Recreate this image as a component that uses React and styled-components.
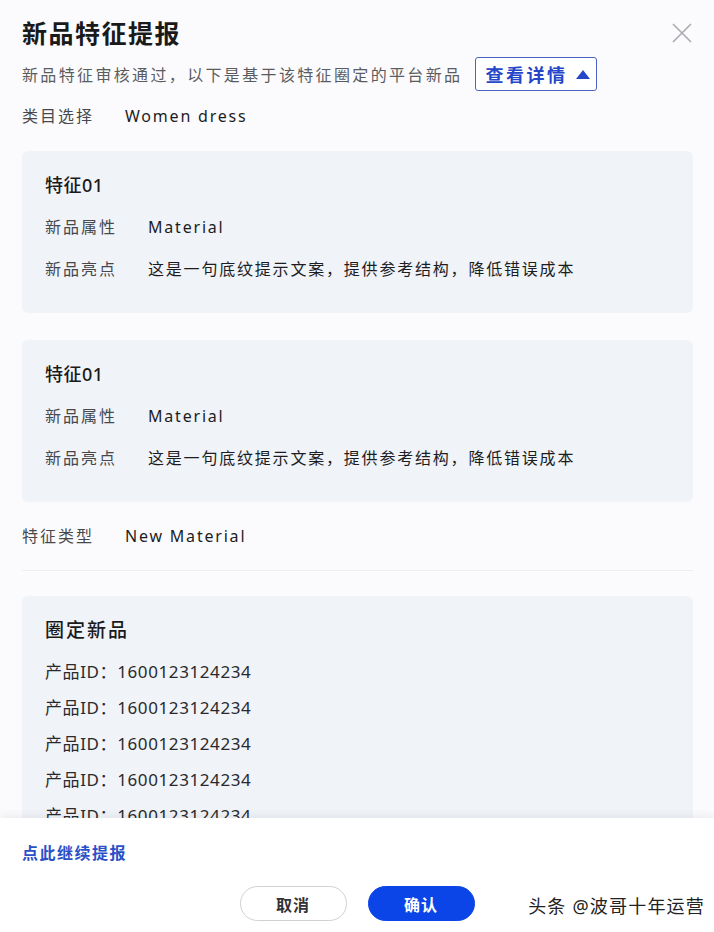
import React from 'react';
import styled, { createGlobalStyle } from 'styled-components';

const GlobalStyle = createGlobalStyle`
  html, body {
    margin: 0;
    padding: 0;
    background: #fbfbfd;
  }
  body {
    font-family: "Noto Sans", "Noto Sans CJK SC", sans-serif;
    color: #1f1f1f;
  }
`;

const features = [
  { name: '特征01', attr: 'Material', highlight: '这是一句底纹提示文案，提供参考结构，降低错误成本' },
  { name: '特征01', attr: 'Material', highlight: '这是一句底纹提示文案，提供参考结构，降低错误成本' },
];

const productIds = ['1600123124234', '1600123124234', '1600123124234', '1600123124234', '1600123124234'];

export default function App() {
  return (
    <>
      <GlobalStyle />
      <Modal>
        <Body>
          <Header>
            <Title>新品特征提报</Title>
            <CloseButton aria-label="close">
              <svg width="22" height="22" viewBox="0 0 22 22">
                <path d="M2 2 L20 20 M20 2 L2 20" stroke="#a9abaf" strokeWidth="1.6" fill="none" />
              </svg>
            </CloseButton>
          </Header>
          <SubRow>
            <Subtitle>新品特征审核通过，以下是基于该特征圈定的平台新品</Subtitle>
            <DetailButton>
              查看详情
              <svg width="16" height="11" viewBox="0 0 16 11">
                <path d="M8 1 L15 10 L1 10 Z" fill="#2446c8" />
              </svg>
            </DetailButton>
          </SubRow>
          <InfoRow $top={13}>
            <Label>类目选择</Label>
            <Value>Women dress</Value>
          </InfoRow>

          {features.map((f, i) => (
            <Card key={i} $top={i === 0 ? 23 : 27}>
              <CardTitle>{f.name}</CardTitle>
              <InfoRow $top={18}>
                <Label>新品属性</Label>
                <Value>{f.attr}</Value>
              </InfoRow>
              <InfoRow $top={18}>
                <Label>新品亮点</Label>
                <Value>{f.highlight}</Value>
              </InfoRow>
            </Card>
          ))}

          <InfoRow $top={22}>
            <Label>特征类型</Label>
            <Value>New Material</Value>
          </InfoRow>
          <Divider />

          <Card $top={25}>
            <CardTitle $big>圈定新品</CardTitle>
            <IdList>
              {productIds.map((id, i) => (
                <IdRow key={i}>产品ID：{id}</IdRow>
              ))}
            </IdList>
          </Card>
        </Body>

        <Footer>
          <MoreLink>点此继续提报</MoreLink>
          <Actions>
            <CancelButton>取消</CancelButton>
            <ConfirmButton>确认</ConfirmButton>
            <Watermark>头条 @波哥十年运营</Watermark>
          </Actions>
        </Footer>
      </Modal>
    </>
  );
}

const Modal = styled.div`
  width: 714px;
  height: 932px;
  display: flex;
  flex-direction: column;
  overflow: hidden;
  background: #fbfbfd;
`;

const Body = styled.div`
  flex: 1;
  min-height: 0;
  overflow: hidden;
  padding: 16px 21px 0 22px;
`;

const Header = styled.div`
  display: flex;
  align-items: center;
  justify-content: space-between;
  height: 34px;
`;

const Title = styled.h1`
  margin: 0;
  font-size: 25px;
  font-weight: 700;
  letter-spacing: 1.5px;
  color: #1a1a1a;
  line-height: 34px;
`;

const CloseButton = styled.button`
  border: none;
  background: none;
  padding: 0;
  display: flex;
  cursor: pointer;
`;

const SubRow = styled.div`
  display: flex;
  align-items: center;
  margin-top: 7px;
  gap: 13px;
`;

const Subtitle = styled.span`
  font-size: 16px;
  letter-spacing: 2.35px;
  color: #5a5c60;
`;

const DetailButton = styled.button`
  display: flex;
  align-items: center;
  gap: 8px;
  height: 34px;
  padding: 0 5px 0 9px;
  border: 1.5px solid #4a63c4;
  border-radius: 3px;
  background: #fff;
  color: #2446c8;
  font-family: "Noto Sans CJK SC", sans-serif;
  font-size: 18px;
  font-weight: 700;
  letter-spacing: 2.5px;
  cursor: pointer;
`;

const InfoRow = styled.div`
  display: flex;
  align-items: center;
  margin-top: ${(p) => p.$top}px;
  line-height: 24px;
  font-size: 16px;
`;

const Label = styled.span`
  width: 103px;
  flex-shrink: 0;
  color: #46484c;
  letter-spacing: 2px;
`;

const Value = styled.span`
  color: #1d1d1f;
  letter-spacing: 1.8px;
`;

const Card = styled.section`
  margin-top: ${(p) => p.$top}px;
  padding: 22px 23px 32px;
  background: #f0f3f8;
  border-radius: 6px;
`;

const CardTitle = styled.h3`
  margin: 0;
  font-size: ${(p) => (p.$big ? '19px' : '18px')};
  font-weight: 500;
  letter-spacing: ${(p) => (p.$big ? '2px' : '0.5px')};
  line-height: 24px;
  color: #1a1a1a;
`;

const IdList = styled.div`
  display: flex;
  flex-direction: column;
  gap: 12px;
  margin-top: 18px;
`;

const IdRow = styled.div`
  font-size: 17px;
  line-height: 24px;
  color: #2a2a2c;
  letter-spacing: 0.6px;
`;

const Divider = styled.hr`
  margin: 22px 0 0;
  border: none;
  border-top: 1px solid #eceef2;
`;

const Footer = styled.footer`
  flex-shrink: 0;
  height: 114px;
  background: #ffffff;
  box-shadow: 0 -3px 8px rgba(0, 0, 0, 0.06);
  padding: 23px 22px 0;
  box-sizing: border-box;
  position: relative;
  z-index: 1;
`;

const MoreLink = styled.a`
  display: block;
  font-size: 16px;
  line-height: 24px;
  font-weight: 700;
  letter-spacing: 1.5px;
  color: #2a4fc7;
  cursor: pointer;
`;

const Actions = styled.div`
  position: relative;
  display: flex;
  justify-content: center;
  gap: 21px;
  margin-top: 21px;
`;

const PillButton = styled.button`
  width: 107px;
  height: 35px;
  border-radius: 18px;
  font-family: "Noto Sans CJK SC", sans-serif;
  font-size: 16px;
  font-weight: 700;
  letter-spacing: 1px;
  cursor: pointer;
`;

const CancelButton = styled(PillButton)`
  background: #fff;
  border: 1px solid #cfd1d5;
  color: #333;
`;

const ConfirmButton = styled(PillButton)`
  background: #0b45e8;
  border: 1px solid #0b45e8;
  color: #fff;
`;

const Watermark = styled.span`
  position: absolute;
  right: -13px;
  top: 6px;
  font-size: 18px;
  color: #222;
  letter-spacing: 1.2px;
`;
